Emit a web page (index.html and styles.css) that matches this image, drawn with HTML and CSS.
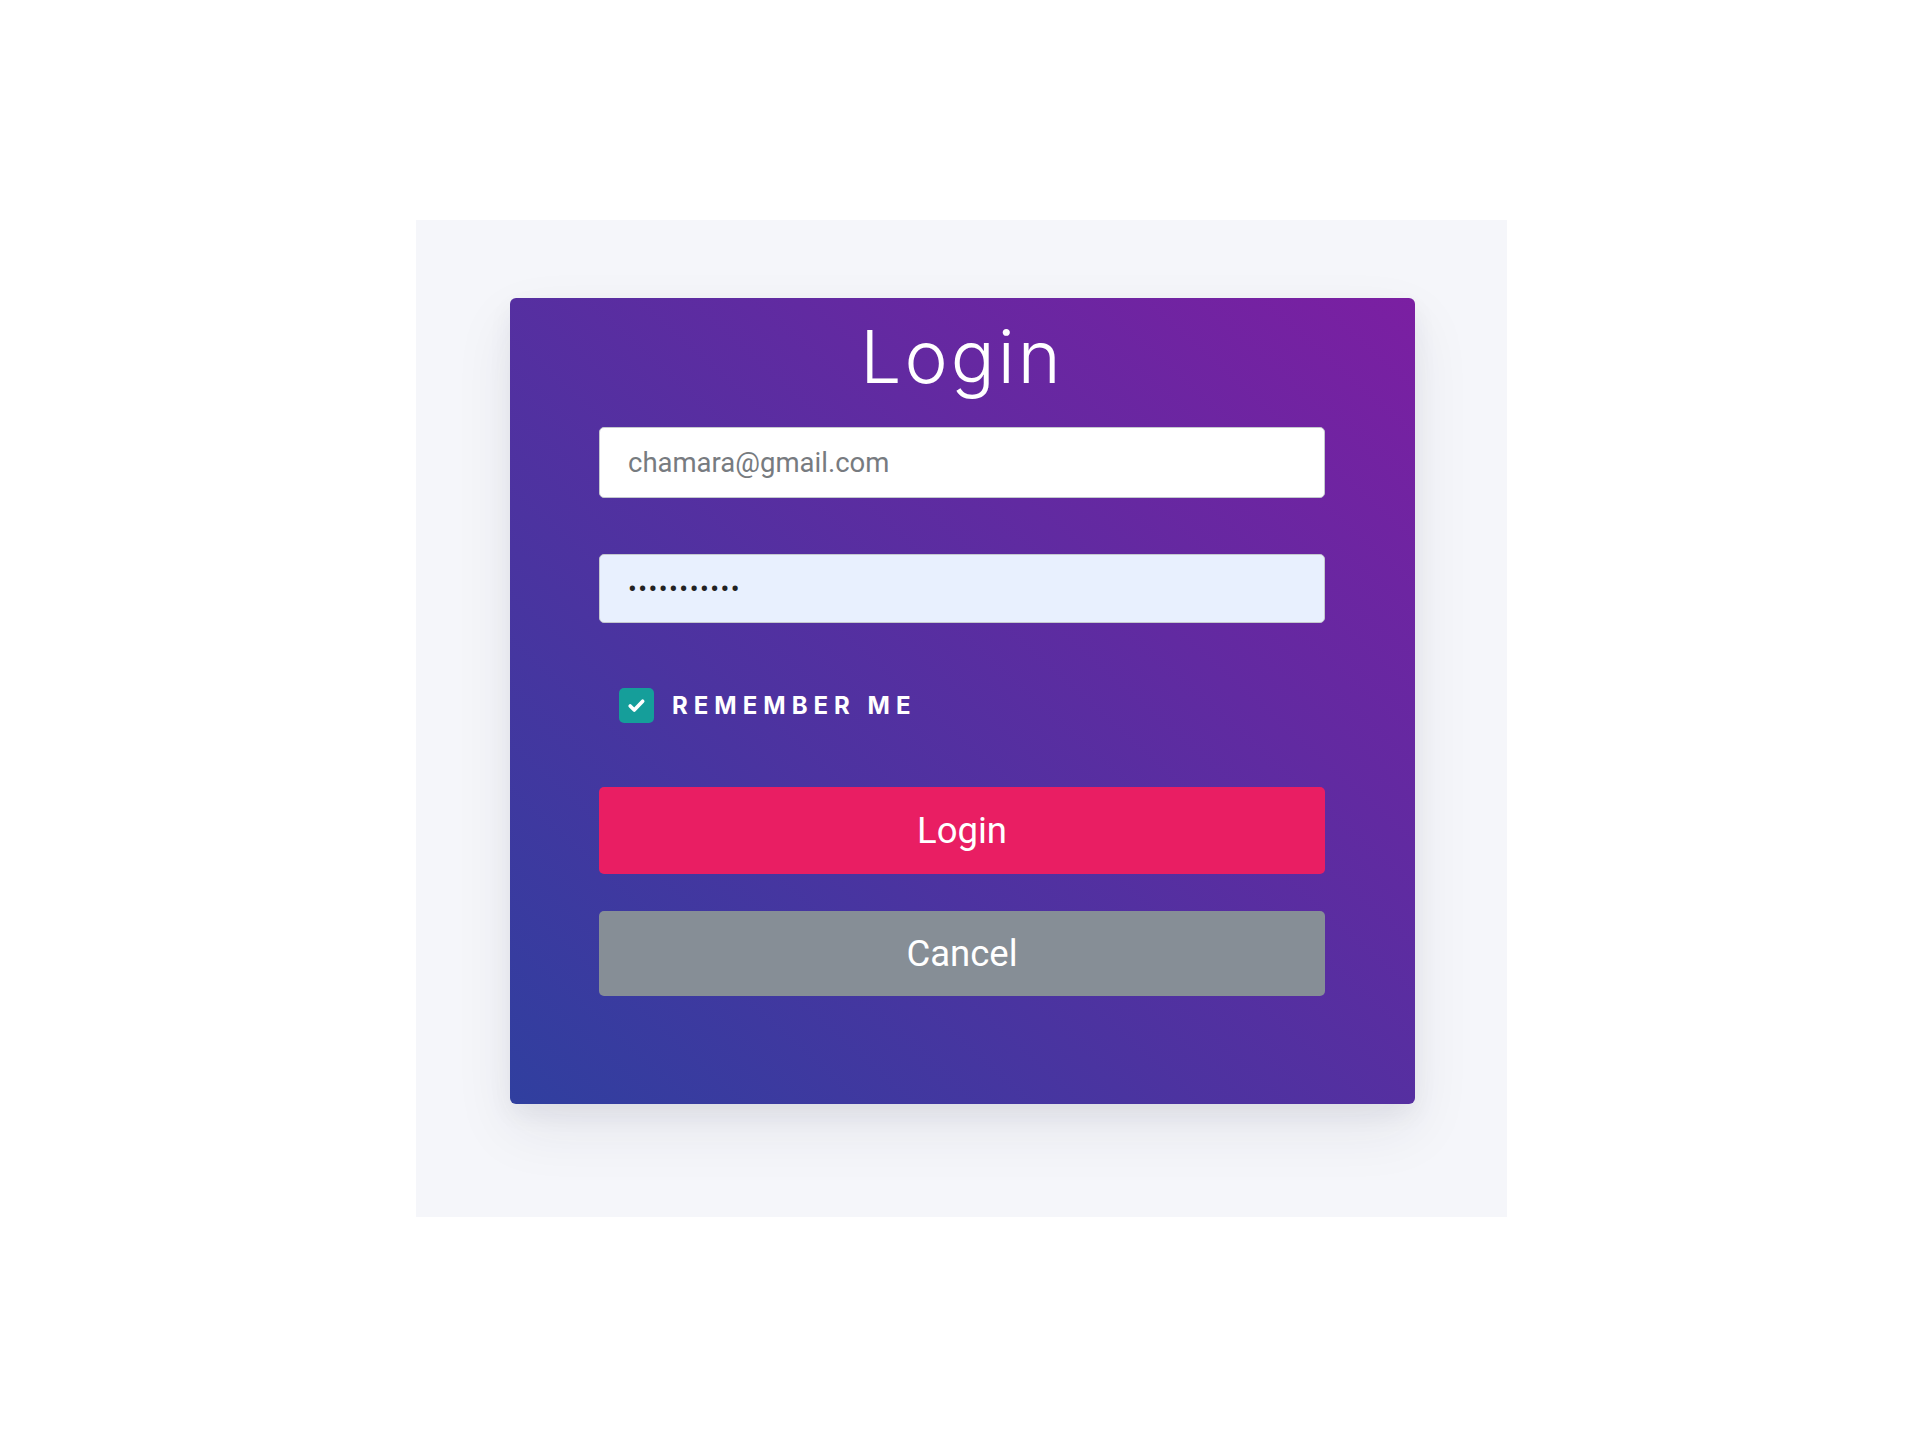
FILE: index.html
```html
<!DOCTYPE html>
<html lang="en">
<head>
    <meta charset="UTF-8">
    <meta name="viewport" content="width=device-width, initial-scale=1.0">
    <title>Login</title>
    <link rel="stylesheet" href="styles.css">
</head>
<body>
    <div class="page">
        <div class="login-card">
            <h1>Login</h1>
            <form class="login-form">
                <input type="email" class="field" placeholder="chamara@gmail.com">
                <input type="password" class="field field-filled" value="12345678901">
                <label class="remember">
                    <span class="check">
                        <svg viewBox="0 0 16 16" width="16" height="16"><path d="M3.2 8.4l3.1 3 6.4-6.6" fill="none" stroke="#fff" stroke-width="2.8" stroke-linecap="round" stroke-linejoin="round"/></svg>
                    </span>
                    Remember me
                </label>
                <button type="submit" class="btn btn-login">Login</button>
                <button type="button" class="btn btn-cancel">Cancel</button>
            </form>
        </div>
    </div>
</body>
</html>
```

FILE: styles.css
```css
body, html {
    margin: 0;
    background: #ffffff;
    font-family: 'Roboto', sans-serif;
}
.page {
    width: 1091px;
    height: 997px;
    margin: 220px 0 0 416px;
    background: #f5f6fa;
    padding: 78px 0 0 94px;
    box-sizing: border-box;
}
.login-card {
    width: 905px;
    height: 806px;
    box-sizing: border-box;
    padding: 23px 90px 0 89px;
    border-radius: 6px;
    background: linear-gradient(to top right, #303f9f, #7b1fa2);
    box-shadow: 0 25px 60px rgba(40, 40, 70, 0.08), 0 10px 25px rgba(40, 40, 70, 0.06);
}
h1 {
    margin: 0;
    font-family: 'Inter', sans-serif;
    font-weight: 300;
    font-size: 73px;
    line-height: 72px;
    letter-spacing: 3px;
    color: #ffffff;
    text-align: center;
}
.login-form {
    display: flex;
    flex-direction: column;
    margin-top: 34px;
}
.field {
    height: 71px;
    box-sizing: border-box;
    border: 1px solid #c4c8ce;
    border-radius: 5px;
    padding: 0 28px;
    font-family: 'Roboto', sans-serif;
    font-size: 27.5px;
    color: #222;
    background: #ffffff;
    outline: none;
}
.field::placeholder {
    color: #777b80;
}
.field + .field {
    margin-top: 56px;
}
.field-filled {
    height: 69px;
    background: #e8f0fe;
    font-size: 26px;
    letter-spacing: 1.5px;
}
.remember {
    display: flex;
    align-items: center;
    gap: 18px;
    margin: 65px 0 0 20px;
    font-family: 'Inter', sans-serif;
    font-weight: 700;
    font-size: 24px;
    letter-spacing: 6px;
    text-transform: uppercase;
    color: #ffffff;
}
.check {
    width: 35px;
    height: 35px;
    border-radius: 5px;
    background: #159e9a;
    display: flex;
    align-items: center;
    justify-content: center;
}
.check svg {
    width: 21px;
    height: 21px;
}
.btn {
    border: none;
    border-radius: 5px;
    color: #ffffff;
    font-family: 'Roboto', sans-serif;
    font-size: 36.5px;
    cursor: pointer;
}
.btn-login {
    height: 87px;
    margin-top: 64px;
    background: #e91e63;
}
.btn-cancel {
    height: 85px;
    margin-top: 37px;
    background: #868e96;
}
```
